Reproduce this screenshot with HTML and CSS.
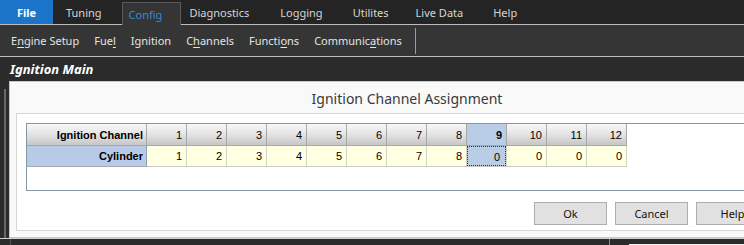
FILE: index.html
```html
<!DOCTYPE html>
<html lang="en">
<head>
    <meta charset="UTF-8">
    <meta name="viewport" content="width=device-width, initial-scale=1.0">
    <title>Ignition Main</title>
    <link rel="stylesheet" href="styles.css">
</head>
<body>
    <div class="menubar">
        <span class="menu-item menu-file">File</span>
        <span class="menu-item">Tuning</span>
        <span class="menu-item menu-active">Config</span>
        <span class="menu-item">Diagnostics</span>
        <span class="menu-item">Logging</span>
        <span class="menu-item menu-tight">Utilites</span>
        <span class="menu-item">Live Data</span>
        <span class="menu-item">Help</span>
    </div>

    <div class="toolbar">
        <span class="tool-item">E<u>n</u>gine Setup</span>
        <span class="tool-item">Fue<u>l</u></span>
        <span class="tool-item">Ignition</span>
        <span class="tool-item">C<u>h</u>annels</span>
        <span class="tool-item">Functi<u>o</u>ns</span>
        <span class="tool-item">Communic<u>a</u>tions</span>
        <span class="tool-sep"></span>
    </div>

    <div class="pagehead">Ignition Main</div>

    <div class="workspace">
        <div class="gutter"><span class="gutter-line"></span></div>

        <div class="dialog">
            <div class="dialog-title">Ignition Channel Assignment</div>

            <div class="dialog-panel">
                <div class="grid">
                    <div class="grid-row grid-head">
                        <div class="cell cell-label">Ignition Channel</div>
                        <div class="cell">1</div>
                        <div class="cell">2</div>
                        <div class="cell">3</div>
                        <div class="cell">4</div>
                        <div class="cell">5</div>
                        <div class="cell">6</div>
                        <div class="cell">7</div>
                        <div class="cell">8</div>
                        <div class="cell cell-current">9</div>
                        <div class="cell">10</div>
                        <div class="cell">11</div>
                        <div class="cell">12</div>
                    </div>
                    <div class="grid-row grid-data">
                        <div class="cell cell-label">Cylinder</div>
                        <div class="cell">1</div>
                        <div class="cell">2</div>
                        <div class="cell">3</div>
                        <div class="cell">4</div>
                        <div class="cell">5</div>
                        <div class="cell">6</div>
                        <div class="cell">7</div>
                        <div class="cell">8</div>
                        <div class="cell cell-current"><span class="focus">0</span></div>
                        <div class="cell">0</div>
                        <div class="cell">0</div>
                        <div class="cell">0</div>
                    </div>
                </div>

                <div class="buttons">
                    <button class="btn">Ok</button>
                    <button class="btn">Cancel</button>
                    <button class="btn">Help</button>
                </div>
            </div>
        </div>
    </div>

    <div class="statusbar">
        <span class="status-edge"></span>
        <span class="status-divider"></span>
        <span class="status-window"></span>
    </div>
</body>
</html>
```

FILE: styles.css
```css
body {
    margin: 0;
    width: 744px;
    height: 245px;
    overflow: hidden;
    background-color: #2b2b2b;
    font-family: "Noto Sans", "Open Sans", sans-serif;
}

/* Top menu */
.menubar {
    display: flex;
    height: 24px;
    background-color: #242424;
    border-bottom: 1px solid #bdbdbd;
}

.menu-item {
    padding: 2px 15px 0;
    font-size: 11px;
    line-height: 22px;
    color: #d6d6d6;
}

.menu-file {
    width: 53px;
    padding: 2px 0 0;
    box-sizing: border-box;
    text-align: center;
    font-weight: bold;
    color: #fff;
    background-color: #1b74c8;
}

.menu-item:nth-child(2) {
    padding: 2px 20px 0 13px;
}

.menu-active {
    margin-top: 2px;
    margin-bottom: -1px;
    padding: 0 18px 0 6px;
    line-height: 23px;
    color: #3389d6;
    background-color: #353535;
    border: 1px solid #5a5a5a;
    border-bottom: none;
}

.menu-active + .menu-item {
    padding: 2px 16px 0 8px;
}

.menu-tight {
    padding-right: 12px;
}

/* Second level bar */
.toolbar {
    display: flex;
    align-items: center;
    height: 31px;
    padding-left: 11px;
    background-color: #353535;
    border-bottom: 1px solid #bdbdbd;
}

.tool-item {
    margin-right: 15px;
    font-size: 11px;
    color: #e4e4e4;
}

.tool-item u {
    text-underline-offset: 2px;
}

.tool-sep {
    width: 1px;
    height: 26px;
    margin-left: -2px;
    background-color: #9c9c9c;
}

.pagehead {
    height: 24px;
    padding-left: 10px;
    font-size: 13px;
    line-height: 24px;
    font-weight: bold;
    font-style: italic;
    color: #fff;
    background-color: #2b2b2b;
}

/* Dialog */
.workspace {
    display: flex;
    height: 157px;
}

.gutter {
    flex: 0 0 9px;
    padding-top: 8px;
    box-sizing: border-box;
}

.gutter-line {
    display: block;
    width: 2px;
    height: 100%;
    margin-left: 4px;
    background-color: #676767;
}

.dialog {
    flex: 0 0 796px;
    box-sizing: border-box;
    background-color: #f9f9f9;
    border: 1px solid #c9c9c9;
    padding: 0 6px 6px;
}

.dialog-title {
    height: 31px;
    font-size: 14px;
    line-height: 33px;
    text-align: center;
    color: #3a3a3a;
}

.dialog-panel {
    background-color: #fff;
    border: 1px solid #d6d6d6;
    padding: 9px 9px 5px;
}

.grid {
    height: 66px;
    border: 1px solid #8396a7;
    background-color: #fff;
    font-family: "Liberation Sans", Arial, sans-serif;
    font-size: 11px;
    color: #000;
}

.grid-row {
    display: grid;
    grid-template-columns: 120px repeat(12, 40px);
}

.cell {
    box-sizing: border-box;
    padding-right: 4px;
    text-align: right;
    border-right: 1px solid #c4c4c4;
    border-bottom: 1px solid #c4c4c4;
}

.grid-head .cell {
    height: 22px;
    line-height: 22px;
    background: linear-gradient(#f7f7f7, #e6e6e6 45%, #c6c6c6);
    border-right-color: #a7a7a7;
    border-bottom-color: #a7a7a7;
}

.grid-data .cell {
    height: 21px;
    line-height: 20px;
    background-color: #ffffe1;
    border-right-color: #d2d2c6;
    border-bottom-color: #c8c8c8;
}

.grid-head .cell-label,
.grid-data .cell-label {
    padding-right: 3px;
    font-weight: bold;
}

.grid-data .cell-label {
    background: #b7cbe7;
    border-right-color: #8f9fb4;
    border-bottom-color: #a0a9b5;
}

.grid-head .cell-current {
    font-weight: bold;
    background: #b9cde6;
}

.grid-data .cell-current {
    padding: 0;
    background: #b9cde6;
}

.focus {
    display: block;
    height: 100%;
    box-sizing: border-box;
    padding-right: 5px;
    border: 1px dotted #333;
}

.buttons {
    display: flex;
    justify-content: flex-end;
    gap: 8px;
    margin-top: 11px;
    padding-right: 19px;
}

.btn {
    width: 73px;
    height: 23px;
    padding: 0;
    font-family: "Noto Sans", sans-serif;
    font-size: 11px;
    color: #111;
    background-color: #e1e1e1;
    border: 1px solid #adadad;
    border-radius: 0;
}

/* Bottom strip */
.statusbar {
    display: flex;
    height: 7px;
    border-top: 1px solid #cfcfcf;
    background-color: #2b2b2b;
}

.status-edge {
    width: 1px;
    margin-left: 10px;
    background-color: #555;
}

.status-divider {
    width: 1px;
    margin-left: 598px;
    background-color: #8a8a8a;
}

.status-window {
    flex: 1;
    margin: 5px 0 0 19px;
    border-top: 1px solid #f0f0f0;
}
```
